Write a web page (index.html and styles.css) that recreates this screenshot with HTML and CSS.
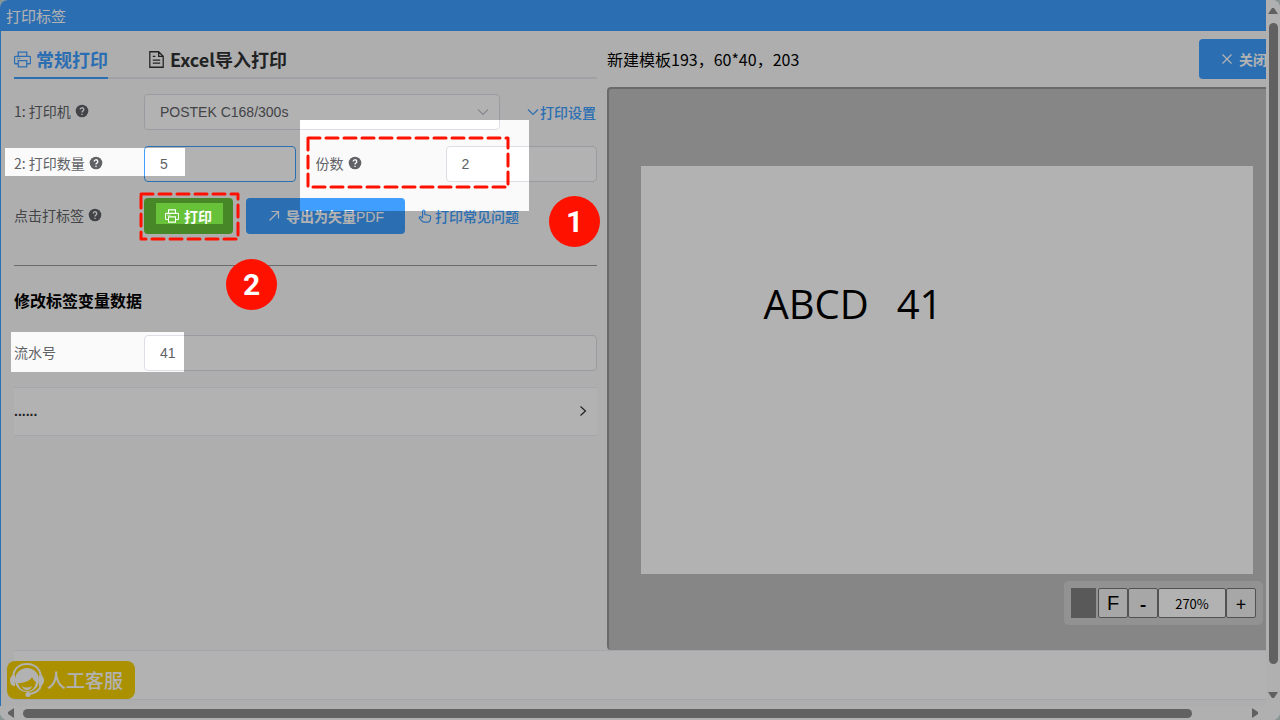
FILE: index.html
```html
<!DOCTYPE html>
<html lang="zh-CN">
<head>
    <meta charset="UTF-8">
    <meta name="viewport" content="width=device-width, initial-scale=1.0">
    <title>打印标签</title>
    <link rel="stylesheet" href="styles.css">
</head>
<body>
    <!-- shared icons -->
    <svg class="sprite" aria-hidden="true">
        <symbol id="i-printer" viewBox="0 0 16 16">
            <path d="M4 5V1h8v4M4 12H1.5a1 1 0 0 1-1-1V6a1 1 0 0 1 1-1h13a1 1 0 0 1 1 1v5a1 1 0 0 1-1 1H12M4 9h8v6H4zM3 7h1M5 7h1"/>
        </symbol>
        <symbol id="i-document" viewBox="0 0 16 16">
            <path d="M10 .7H1.7v14.6h12.6V5zM10 .7V5h4.3M4.5 5H7M4.5 8.5h7M4.5 11.5h7"/>
        </symbol>
        <symbol id="i-question" viewBox="0 0 14 14">
            <circle cx="7" cy="7" r="6.3" fill="#606266" stroke="none"/>
            <path d="M5.2 5.6a1.8 1.8 0 1 1 2.6 1.6c-.6.3-.8.6-.8 1.2M7 9.8v1.1" stroke="#fff" stroke-width="1.3"/>
        </symbol>
        <symbol id="i-down" viewBox="0 0 14 14"><path d="M2 4.5l5 5 5-5"/></symbol>
        <symbol id="i-right" viewBox="0 0 14 14"><path d="M4.5 2.5L9.5 7l-5 4.5"/></symbol>
        <symbol id="i-close" viewBox="0 0 14 14"><path d="M2.5 2.5l9 9M11.5 2.5l-9 9"/></symbol>
        <symbol id="i-export" viewBox="0 0 14 14"><path d="M2.5 11.5l9-9M4.5 2.5h7v7"/></symbol>
        <symbol id="i-pointer" viewBox="0 0 14 14">
            <path d="M4.6 8.6V2.2a1.1 1.1 0 0 1 2.2 0v3.3l4.6 1c1 .2 1.4.8 1.3 1.7l-.5 3c-.2 1.2-.8 1.9-2 1.9H6c-.8 0-1.4-.4-1.9-1L1.4 9.3c-.6-.9.3-1.9 1.2-1.5l2 1.5"/>
        </symbol>
    </svg>

    <div class="window">
        <div class="content">
            <header class="titlebar">打印标签</header>
            <main class="workspace">
                <section class="settings">
                    <nav class="tabs">
                        <a class="tab active" href="#normal"><svg class="icon-lg"><use href="#i-printer"/></svg>常规打印</a>
                        <a class="tab" href="#excel"><svg class="icon-lg"><use href="#i-document"/></svg>Excel导入打印</a>
                    </nav>
                    <form class="form">
                        <div class="row">
                            <label class="label" for="printer">1: 打印机 <svg class="icon"><use href="#i-question"/></svg></label>
                            <div class="select-wrap">
                                <select id="printer" class="field">
                                    <option>POSTEK C168/300s</option>
                                </select>
                                <svg class="icon select-arrow"><use href="#i-down"/></svg>
                            </div>
                            <a class="link link-end" href="#setup"><svg class="icon"><use href="#i-down"/></svg>打印设置</a>
                        </div>
                        <div class="row-pair">
                            <div class="row">
                                <label class="label" for="count">2: 打印数量 <svg class="icon"><use href="#i-question"/></svg></label>
                                <input id="count" class="field focused" type="text" value="5">
                            </div>
                            <div class="row">
                                <label class="label" for="copies">份数 <svg class="icon"><use href="#i-question"/></svg></label>
                                <input id="copies" class="field" type="text" value="2">
                            </div>
                        </div>
                        <div class="row">
                            <span class="label">点击打标签 <svg class="icon"><use href="#i-question"/></svg></span>
                            <div class="actions">
                                <button class="btn success" type="button"><svg class="icon"><use href="#i-printer"/></svg><b>打印</b></button>
                                <button class="btn primary" type="button"><svg class="icon"><use href="#i-export"/></svg><span><b>导出为矢量</b>PDF</span></button>
                                <a class="link" href="#faq"><svg class="icon"><use href="#i-pointer"/></svg>打印常见问题</a>
                            </div>
                        </div>
                        <hr class="divider">
                        <h2 class="subtitle">修改标签变量数据</h2>
                        <div class="row">
                            <label class="label" for="serial">流水号</label>
                            <input id="serial" class="field" type="text" value="41">
                        </div>
                        <button class="collapse" type="button">......<svg class="icon"><use href="#i-right"/></svg></button>
                    </form>
                </section>
                <section class="preview">
                    <div class="preview-head">
                        <span>新建模板193，60*40，203</span>
                        <button class="btn primary close" type="button"><svg class="icon"><use href="#i-close"/></svg><b>关闭</b></button>
                    </div>
                    <div class="stage">
                        <div class="paper">
                            <div class="paper-text"><span>ABCD</span><span>41</span></div>
                        </div>
                        <div class="zoom">
                            <span class="swatch"></span>
                            <button class="fit" type="button">F</button>
                            <button type="button"><b>-</b></button>
                            <input type="text" value="270%" aria-label="缩放">
                            <button type="button">+</button>
                        </div>
                    </div>
                </section>
            </main>
            <footer class="footer"></footer>
        </div>
        <div class="scroll scroll-y">
            <svg viewBox="0 0 10 8"><path d="M4 1h2l4 6H0z"/></svg>
            <span class="thumb"></span>
            <svg viewBox="0 0 10 8"><path d="M4 7h2l4-6H0z"/></svg>
        </div>
        <div class="scroll scroll-x">
            <svg viewBox="0 0 8 10"><path d="M1 4v2l6 4V0z"/></svg>
            <span class="thumb"></span>
            <svg viewBox="0 0 8 10"><path d="M7 4v2l-6 4V0z"/></svg>
        </div>
        <button class="service" type="button">
            <svg viewBox="0 0 36 36">
                <circle cx="18" cy="18" r="12" fill="#fff"/>
                <path d="M9 21c6 0 12-2 14-6 1 2 2 4 4 5-1 6-4 9-9 9s-8-3-9-8z" fill="#f5d000"/>
                <path d="M13 24c3 2 7 2 10 0-1 3-3 4-5 4s-4-1-5-4z" fill="#fff"/>
                <path d="M4 15C5 6 11 2 18 2s13 4 14 13M32 23c-1 5-5 8-12 9" fill="none" stroke="#fff" stroke-width="2"/>
                <path d="M6 13v11c-3 0-5-2-5-5.500S3 13 6 13zM30 13v11c3 0 5-2 5-5.500S33 13 30 13z" fill="#fff"/>
                <circle cx="19" cy="32.500" r="2.500" fill="#fff"/>
            </svg>人工客服
        </button>
    </div>

    <!-- dimmed layer with the highlighted areas left open -->
    <svg class="guide" aria-hidden="true">
        <mask id="holes">
            <rect width="100%" height="100%" fill="#fff"/>
            <rect x="5" y="148" width="180" height="28"/>
            <rect x="300" y="120" width="229" height="91"/>
            <rect x="156" y="203" width="67" height="21"/>
            <rect x="11" y="332" width="173" height="40"/>
        </mask>
        <rect width="100%" height="100%" fill="#000" fill-opacity=".3" mask="url(#holes)"/>
        <rect class="dash" x="308" y="138" width="200" height="49"/>
        <rect class="dash" x="141" y="194" width="97" height="45"/>
    </svg>
    <span class="step step-1">1</span>
    <span class="step step-2">2</span>
</body>
</html>
```

FILE: styles.css
```css
* {
    box-sizing: border-box;
}
body {
    margin: 0;
    background: #c3d6d6;
    font-family: "Noto Sans CJK SC", sans-serif;
    font-size: 14px;
    color: #606266;
}
a {
    text-decoration: none;
}
.sprite {
    position: absolute;
    width: 0;
    height: 0;
}
.icon,
.icon-lg {
    width: 14px;
    height: 14px;
    flex: none;
    fill: none;
    stroke: currentColor;
    stroke-width: 1.2;
}
.icon-lg {
    width: 17px;
    height: 17px;
}

/* window */
.window {
    position: relative;
    display: grid;
    grid-template-columns: minmax(0, 1fr) 14px;
    grid-template-rows: minmax(0, 1fr) 14px;
    height: 100vh;
    background: #fafafa;
    border-radius: 8px;
    overflow: hidden;
}
.content {
    display: flex;
    flex-direction: column;
    border-left: 1px solid #409eff;
    overflow: hidden;
}
.titlebar {
    height: 31px;
    line-height: 31px;
    padding-left: 5px;
    background: #409eff;
    color: #fff;
    font-size: 15px;
    flex: none;
}
.workspace {
    flex: 1;
    display: grid;
    grid-template-columns: minmax(0, 583fr) minmax(0, 659fr);
    gap: 10px;
    padding-left: 13px;
}

/* left side */
.tabs {
    display: flex;
    gap: 40px;
    height: 48px;
    border-bottom: 2px solid #e4e7ed;
}
.tab {
    display: flex;
    align-items: center;
    gap: 5px;
    padding-top: 10px;
    height: 48px;
    border-bottom: 2px solid transparent;
    font-size: 18px;
    font-weight: bold;
    color: #303133;
}
.tab.active {
    color: #409eff;
    border-color: #409eff;
}
.form {
    display: flex;
    flex-direction: column;
    gap: 16px;
    padding-top: 15px;
}
.row {
    display: flex;
    align-items: center;
    min-width: 0;
}
.row-pair {
    display: grid;
    grid-template-columns: 1fr 1fr;
    gap: 20px;
}
.label {
    display: flex;
    align-items: center;
    gap: 4px;
    flex: 0 0 130px;
    padding-bottom: 2px;
}
.field {
    width: 100%;
    min-width: 0;
    height: 36px;
    padding: 0 15px;
    border: 1px solid #dcdfe6;
    border-radius: 4px;
    background: #fff;
    color: #606266;
    font-family: "Liberation Sans", sans-serif;
    font-size: 14px;
    appearance: none;
    outline: none;
}
.focused {
    border-color: #409eff;
}
.select-wrap {
    position: relative;
    flex: 1;
}
.select-arrow {
    position: absolute;
    top: 11px;
    right: 10px;
    color: #c0c4cc;
}
.link {
    display: flex;
    align-items: center;
    color: #409eff;
    font-weight: 500;
}
.link-end {
    flex: 0 0 97px;
    justify-content: flex-end;
    padding-right: 1px;
}
.actions {
    display: flex;
    gap: 13px;
}
.actions .link {
    gap: 3px;
}
.btn {
    display: flex;
    align-items: center;
    justify-content: center;
    gap: 5px;
    height: 36px;
    padding: 0 21px;
    border: none;
    border-radius: 4px;
    color: #fff;
    font-family: "Liberation Sans", "Noto Sans CJK SC", sans-serif;
    font-size: 14px;
    white-space: nowrap;
}
.primary {
    background: #409eff;
}
.success {
    background: #67c23a;
}
.divider {
    width: 100%;
    margin: 15px 0 0;
    border: solid #9a9a9a;
    border-width: 1px 0 0;
}
.subtitle {
    margin: 6px 0 7px;
    font-size: 16px;
    line-height: 24px;
    font-weight: bold;
    color: #000;
}
.collapse {
    display: flex;
    align-items: center;
    justify-content: space-between;
    height: 49px;
    padding: 0 7px 2px 0;
    border: solid #ebeef5;
    border-width: 1px 0;
    background: #fff;
    color: #303133;
    font-family: "Liberation Sans", sans-serif;
    font-size: 14px;
    font-weight: bold;
}

/* right side */
.preview {
    display: flex;
    flex-direction: column;
}
.preview-head {
    display: flex;
    align-items: center;
    justify-content: space-between;
    padding: 8px 0;
    font-size: 16px;
    color: #000;
}
.close {
    height: 40px;
    margin-right: -22px;
}
.stage {
    flex: 1;
    display: flex;
    flex-direction: column;
    padding: 77px 0 0 32px;
    border: solid #999;
    border-width: 2px 0 0 2px;
    border-radius: 4px 0 0 4px;
    background: #c0c0c0;
}
.paper {
    position: relative;
    aspect-ratio: 3 / 2;
    margin-right: 13px;
    background: #fff;
}
.paper-text {
    position: absolute;
    left: 20%;
    top: 27%;
    display: flex;
    gap: 28px;
    font-family: "Open Sans", sans-serif;
    font-size: 40px;
    color: #000;
}
.zoom {
    display: flex;
    align-self: flex-end;
    margin: 7px 3px 0 0;
    padding: 7px;
    border-radius: 5px;
    background: #d2d2d2;
}
.swatch {
    width: 25px;
    height: 30px;
    margin-right: 2px;
    background: #808080;
}
.zoom button,
.zoom input {
    width: 30px;
    height: 30px;
    padding: 0;
    border: 1px solid #767676;
    border-radius: 2px;
    background: #efefef;
    color: #000;
    font-family: "Noto Sans CJK SC", sans-serif;
    font-size: 18px;
    line-height: 26px;
    text-align: center;
}
.zoom .fit {
    font-family: "Liberation Sans", sans-serif;
    font-size: 20px;
}
.zoom input {
    width: 68px;
    background: #fff;
    font-size: 13px;
}
.footer {
    height: 50px;
    margin: 0 0 6px 13px;
    border: solid #ebeef5;
    border-width: 1px 0;
    background: #fff;
    flex: none;
}

/* scrollbars */
.scroll {
    display: flex;
    align-items: center;
    gap: 8px;
    background: #fcfcfc;
}
.scroll svg {
    flex: none;
    fill: #8b8b8b;
}
.scroll .thumb {
    flex: 1;
    border-radius: 5px;
    background: #8b8b8b;
}
.scroll-y {
    flex-direction: column;
    padding: 7px 0;
}
.scroll-y svg {
    width: 10px;
    height: 8px;
}
.scroll-y .thumb {
    width: 9px;
    margin-bottom: 19px;
}
.scroll-x {
    grid-column: 1 / 3;
    padding: 0 21px 0 7px;
}
.scroll-x svg {
    width: 8px;
    height: 10px;
}
.scroll-x .thumb {
    height: 9px;
    margin-right: 51px;
}

/* customer service button */
.service {
    position: absolute;
    left: 7px;
    bottom: 21px;
    display: flex;
    align-items: center;
    gap: 2px;
    width: 128px;
    height: 38px;
    padding: 0 2px;
    border: none;
    border-radius: 8px;
    background: #f5d000;
    color: #fff;
    font-family: inherit;
    font-size: 19px;
    font-weight: 500;
    line-height: 24px;
}
.service svg {
    width: 36px;
    height: 36px;
}

/* guide layer */
.guide {
    position: absolute;
    top: 0;
    left: 0;
    width: 100%;
    height: 100%;
    pointer-events: none;
}
.dash {
    fill: none;
    stroke: #ff1100;
    stroke-width: 3;
    stroke-linecap: round;
    stroke-linejoin: round;
    stroke-dasharray: 12 6;
}
.step {
    position: absolute;
    width: 51px;
    height: 51px;
    border-radius: 50%;
    background: #ff1100;
    color: #fff;
    font: bold 30px/51px Roboto, sans-serif;
    text-align: center;
}
.step-1 {
    left: 549px;
    top: 196px;
}
.step-2 {
    left: 226px;
    top: 259px;
}
```
